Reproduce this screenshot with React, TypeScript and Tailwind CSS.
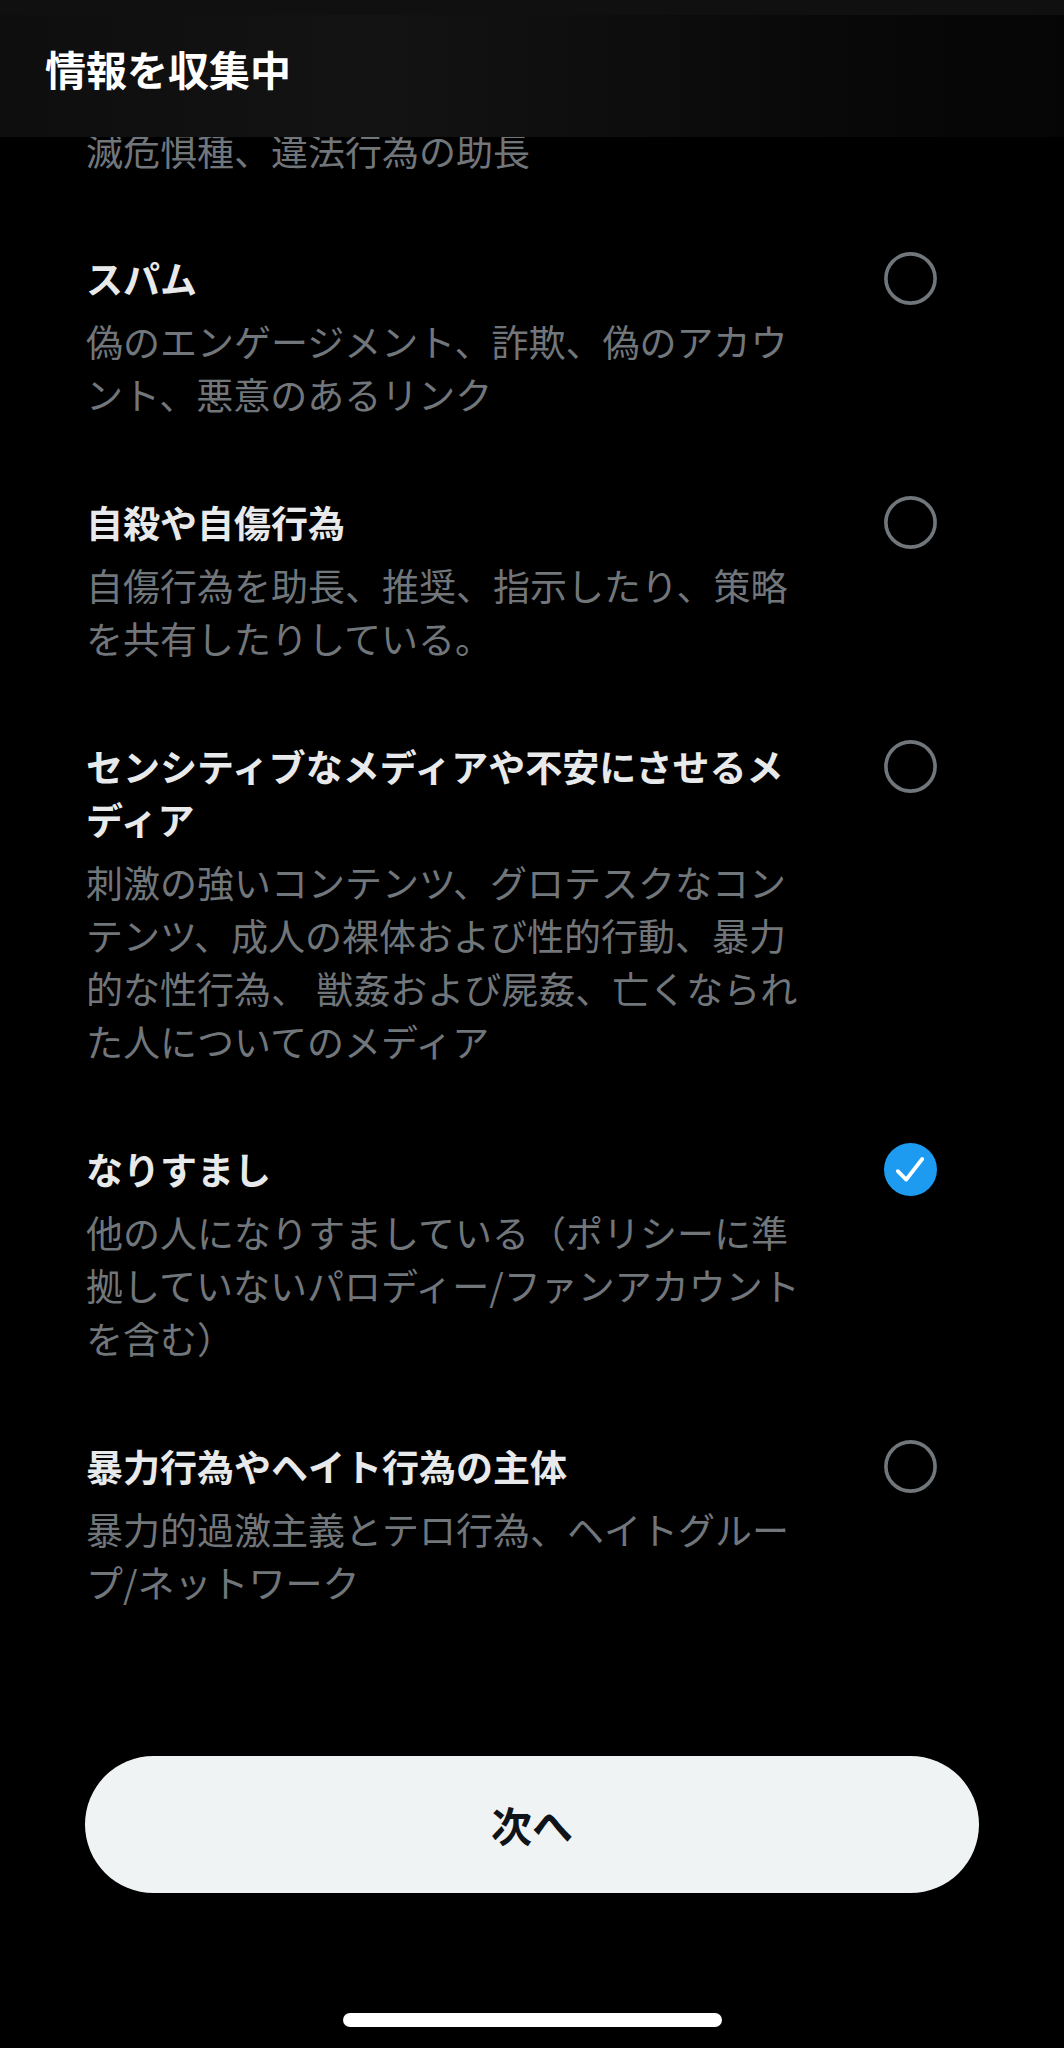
import React from 'react';

type Reason = {
    title: string;
    desc: string;
    checked?: boolean;
};

const reasons: Reason[] = [
    {
        title: 'スパム',
        desc: '偽のエンゲージメント、詐欺、偽のアカウント、悪意のあるリンク',
    },
    {
        title: '自殺や自傷行為',
        desc: '自傷行為を助長、推奨、指示したり、策略を共有したりしている。',
    },
    {
        title: 'センシティブなメディアや不安にさせるメディア',
        desc: '刺激の強いコンテンツ、グロテスクなコンテンツ、成人の裸体および性的行動、暴力的な性行為、 獣姦および屍姦、亡くなられた人についてのメディア',
    },
    {
        title: 'なりすまし',
        desc: '他の人になりすましている（ポリシーに準拠していないパロディー/ファンアカウントを含む）',
        checked: true,
    },
    {
        title: '暴力行為やヘイト行為の主体',
        desc: '暴力的過激主義とテロ行為、ヘイトグループ/ネットワーク',
    },
];

function Radio({ checked }: { checked?: boolean }) {
    if (checked) {
        return (
            <svg width="53" height="53" viewBox="0 0 53 53" className="shrink-0">
                <circle cx="26.5" cy="26.5" r="26.5" fill="#1d9bf0" />
                <path
                    d="M13.8 28.2 L22.2 36.6 L38.2 16"
                    fill="none"
                    stroke="#ffffff"
                    strokeWidth="3.8"
                    strokeLinecap="round"
                    strokeLinejoin="round"
                />
            </svg>
        );
    }
    return (
        <svg width="53" height="53" viewBox="0 0 53 53" className="shrink-0">
            <circle cx="26.5" cy="26.5" r="24.6" fill="none" stroke="#71767b" strokeWidth="3.6" />
        </svg>
    );
}

export default function App() {
    return (
        <div
            className="w-[1064px] h-[2048px] bg-black flex flex-col overflow-hidden"
            style={{ fontFamily: '"Noto Sans CJK JP", "Noto Sans", sans-serif' }}
        >
            {/* header */}
            <div className="relative z-10 h-[137px] flex flex-col bg-gradient-to-r from-[#0e0e0e] via-[#131313] via-35% to-[#050505]">
                <div className="h-[15px] bg-[#101010]" />
                <div className="flex-1 flex items-start pl-[45px] pt-[28px]">
                    <h1 className="text-[41px] leading-[50px] font-bold text-white">情報を収集中</h1>
                </div>
            </div>

            {/* reasons */}
            <div className="-mt-[13px] flex flex-col gap-[75px] pl-[86px] pr-[127px]">
                <p className="text-[37px] leading-[53px] text-[#71767b] w-[725px]">滅危惧種、違法行為の助長</p>
                {reasons.map(r => (
                    <div key={r.title} className="flex items-start justify-between">
                        <div className="w-[725px]">
                            <p className="text-[37px] leading-[53px] font-bold text-[#e7e9ea]">{r.title}</p>
                            <p className="mt-[10px] text-[37px] leading-[53px] text-[#71767b]">{r.desc}</p>
                        </div>
                        <Radio checked={r.checked} />
                    </div>
                ))}
            </div>

            {/* footer */}
            <div className="mt-auto flex flex-col items-center pb-[21px]">
                <button className="w-[894px] h-[137px] rounded-full bg-[#eff3f4] text-[41px] font-bold text-[#0f1419]">
                    次へ
                </button>
                <div className="mt-[120px] w-[379px] h-[14px] rounded-full bg-white" />
            </div>
        </div>
    );
}
